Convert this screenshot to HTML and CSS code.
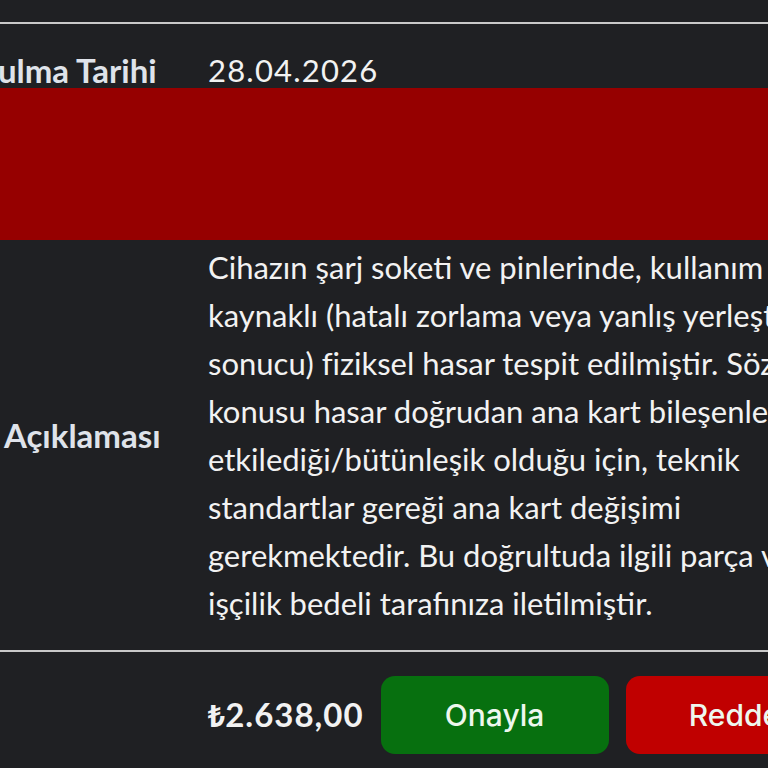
FILE: index.html
```html
<!DOCTYPE html>
<html lang="tr">
<head>
<meta charset="utf-8">
<title>Servis Detayı</title>
<link rel="stylesheet" href="styles.css">
</head>
<body>
<div class="sheet">
  <div class="rule rule-top"></div>
  <div class="row row-date">
    <div class="label">Oluşturulma Tarihi</div>
    <div class="value date">28.04.2026</div>
  </div>
  <div class="redact"></div>
  <div class="row row-desc">
    <div class="label">Tamirci Açıklaması</div>
    <p class="value desc">Cihazın şarj soketi ve pinlerinde, kullanım<br>kaynaklı (hatalı zorlama veya yanlış yerleştirme<br>sonucu) fiziksel hasar tespit edilmiştir. Söz<br>konusu hasar doğrudan ana kart bileşenlerini<br>etkilediği/bütünleşik olduğu için, teknik<br>standartlar gereği ana kart değişimi<br>gerekmektedir. Bu doğrultuda ilgili parça ve<br>işçilik bedeli tarafınıza iletilmiştir.</p>
  </div>
  <div class="rule rule-bottom"></div>
  <div class="row row-actions">
    <div class="label"></div>
    <div class="actions">
      <span class="price"><span class="currency">₺</span>2.638,00</span>
      <button class="btn btn-approve">Onayla</button>
      <button class="btn btn-reject">Reddet</button>
    </div>
  </div>
</div>
</body>
</html>
```
FILE: styles.css
```css
html, body {
  margin: 0;
  padding: 0;
  background: #1f2023;
}
body {
  width: 768px;
  height: 768px;
  overflow: hidden;
  font-family: "Lato", "Noto Sans", sans-serif;
  color: #f2f2f2;
}
.sheet {
  width: 1100px;
  margin-left: -113px;
}
.rule {
  border-top: 2px solid #c9c9c9;
}
.rule-top {
  margin-top: 22px;
}
.row {
  display: grid;
  grid-template-columns: 321px 1fr;
  align-items: center;
}
.label {
  font-weight: 700;
  font-size: 33px;
  color: #dfe3ea;
  white-space: nowrap;
}
.row-desc .label {
  padding-left: 5px;
}
.value {
  font-size: 31px;
  color: #f2f2f2;
  white-space: nowrap;
  margin: 0;
}
.date {
  letter-spacing: 1.2px;
}
.row-date {
  padding-top: 28px;
  line-height: 36px;
  height: 36px;
}
.redact {
  height: 152px;
  background: #960000;
}
.row-desc {
  padding: 3px 0 23px;
}
.desc {
  line-height: 48px;
}
.row-actions {
  padding-top: 24px;
}
.actions {
  display: flex;
  align-items: center;
  gap: 17px;
}
.price {
  font-weight: 700;
  font-size: 33px;
  letter-spacing: 1px;
  color: #f2f2f2;
}
.currency {
  font-family: "Noto Sans", "DejaVu Sans", sans-serif;
  font-size: 30px;
  letter-spacing: 0;
}
.btn {
  flex: none;
  width: 228px;
  height: 78px;
  border: none;
  border-radius: 14px;
  font-family: "Inter", "Lato", sans-serif;
  font-weight: 500;
  font-size: 30px;
  color: #eef7ee;
  padding: 0;
}
.btn-approve {
  background: #07700f;
}
.btn-reject {
  background: #c00000;
}
```
